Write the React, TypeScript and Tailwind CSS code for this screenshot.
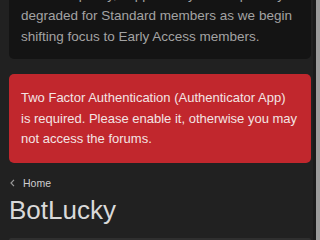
import React from "react";

function App() {
  return (
    <div className="flex w-[320px] h-[240px] overflow-hidden bg-[#212121] font-['Liberation_Sans',Arial,sans-serif]">
      <div className="flex-1 flex flex-col pl-[9px] pr-[2px]">
        {/* notice box, scrolled partly out of view */}
        <div className="mt-[-28px] rounded-[5px] bg-[#141414] px-[12px] pt-[12px] pb-[12px] text-[13.5px] leading-[21px] text-[#a3a3a3]">
          Due to capacity, support may be temporarily<br />
          degraded for Standard members as we begin shifting focus to Early Access members.
        </div>

        <div className="mt-[15px] rounded-[5px] bg-[#c1272d] pl-[12px] pr-[8px] pt-[14px] pb-[13px] text-[13px] leading-[20.5px] text-[#f3e4e4]">
          Two Factor Authentication (Authenticator App)<br />
          is required. Please enable it, otherwise you may not access the forums.
        </div>

        <div className="mt-[13px] flex items-center gap-[8px] pl-[1px] text-[10.5px] leading-[14px] text-[#cfcfcf]">
          <svg width="5" height="8" viewBox="0 0 5 8" fill="none">
            <path d="M4 0.8 L1 4 L4 7.2" stroke="#9a9a9a" strokeWidth="1.2" />
          </svg>
          <span>Home</span>
        </div>

        <div className="mt-[5px] text-[26px] leading-[30px] text-[#d9d9d9]">
          BotLucky
        </div>

        <div className="mt-[13px] h-[20px] rounded-t-[4px] border border-[#2f2f2f] bg-[#262626]" />
      </div>
      <div className="w-[3px] bg-[#1a1a1a]" />
      <div className="w-[4px] bg-[#9c9c9c]" />
    </div>
  );
}

export default App;
